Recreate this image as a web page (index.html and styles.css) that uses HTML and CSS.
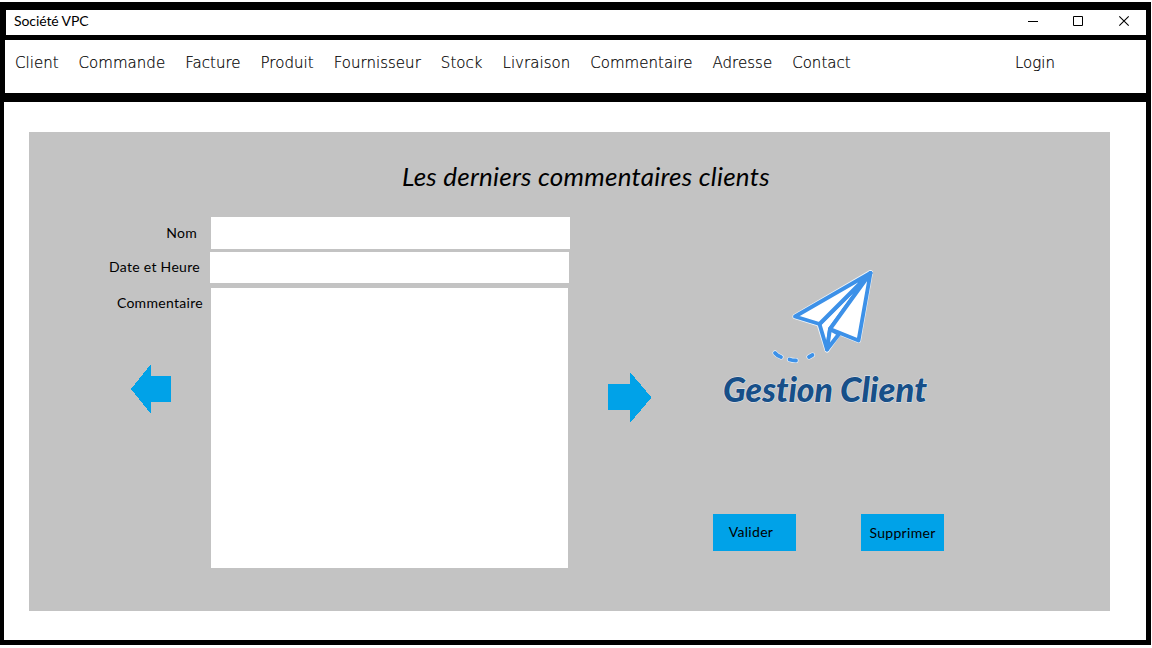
FILE: index.html
```html
<!DOCTYPE html>
<html lang="fr">
<head>
<meta charset="utf-8">
<title>Société VPC</title>
<link rel="stylesheet" href="styles.css">
</head>
<body>
<div class="window">
  <header class="titlebar">
    <span class="app-name">Société VPC</span>
    <svg class="controls" width="102" height="12" viewBox="0 0 102 12" fill="none" stroke="#000">
      <path d="M0 6.500H10"/>
      <path d="M45.500 1.500h9v9h-9z"/>
      <path d="M91.300 1.300l9.400 9.400M100.700 1.300l-9.400 9.400" stroke-width="1.100"/>
    </svg>
  </header>
  <nav class="menu">
    <a>Client</a><a>Commande</a><a>Facture</a><a>Produit</a><a>Fournisseur</a><a>Stock</a><a>Livraison</a><a>Commentaire</a><a>Adresse</a><a>Contact</a><a class="login">Login</a>
  </nav>
  <main class="content">
    <section class="panel">
      <h1 class="heading">Les derniers commentaires clients</h1>
      <div class="columns">
        <div class="previous">
          <div class="labels">
            <label class="label-name">Nom</label>
            <label class="label-date">Date et Heure</label>
            <label class="label-comment">Commentaire</label>
          </div>
          <svg class="arrow-left" width="40" height="50" viewBox="0 0 40 50" shape-rendering="crispEdges"><path fill="#00a2e8" d="M0 25L20 0V12H40V38H20V50Z"/></svg>
        </div>
        <div class="fields">
          <div class="field name"></div>
          <div class="field date"></div>
          <div class="field comment"></div>
        </div>
        <svg class="arrow-right" width="44" height="51" viewBox="0 0 44 51" shape-rendering="crispEdges"><path fill="#00a2e8" d="M43.500 25.500L22 0V12H0V38H22V51Z"/></svg>
        <div class="side">
          <svg class="logo" width="220" height="160" viewBox="715 265 220 160">
            <g stroke-linejoin="round" stroke-linecap="round">
              <path class="halo" d="M795 316.500L870.500 272.500L858.500 340.500L830 329L839 333L827 350L819 324Z"/>
              <g fill="#fff" stroke="#3d91e8" stroke-width="3.900">
                <path d="M819.500 324L870.500 273L830 329L827 349.500Z"/>
                <path d="M830 329L827 349.500L839 334Z"/>
                <path d="M795 316.500L870.500 273L819.500 324Z"/>
                <path d="M870.500 273L858.500 340.500L830 329Z"/>
              </g>
              <path class="halo trail" d="M775 353Q777 355.500 781 357M789.500 359.500Q792 360.500 796 360.500M809 357L812.500 355"/>
              <path fill="none" stroke="#3d91e8" stroke-width="3.800" d="M775 353Q777 355.500 781 357M789.500 359.500Q792 360.500 796 360.500M809 357L812.500 355"/>
            </g>
            <text class="brand" y="402"><tspan x="723" textLength="110" lengthAdjust="spacingAndGlyphs">Gestion</tspan> <tspan x="840" textLength="87" lengthAdjust="spacingAndGlyphs">Client</tspan></text>
          </svg>
          <div class="actions">
            <button class="btn validate">Valider</button>
            <button class="btn remove">Supprimer</button>
          </div>
        </div>
      </div>
    </section>
  </main>
</div>
</body>
</html>
```
FILE: styles.css
```css
* { box-sizing: border-box; }
body {
  margin: 0;
  padding-top: 2px;
  background: #fff;
  color: #000;
  font-family: Lato, "Noto Sans", sans-serif;
  font-variant-ligatures: none;
  overflow: hidden;
}
.window {
  width: 1151px;
  height: 643px;
  padding: 8px 5px 5px 4px;
  background: #000;
}
.titlebar {
  display: flex;
  justify-content: space-between;
  height: 25px;
  margin-left: 2px;
  padding: 0 16px 0 8px;
  background: #fff;
}
.app-name { font-size: 14px; line-height: 22px; letter-spacing: -0.1px; }
.controls { margin-top: 5px; }
.menu {
  display: flex;
  gap: 20px;
  height: 53px;
  margin: 5px 0 9px 1px;
  padding: 11px 91px 0 10px;
  background: #fff;
  color: #000;
  font: 200 15px/25px "DejaVu Sans", "DejaVu Sans Light", sans-serif;
  letter-spacing: 0.03px;
  -webkit-text-stroke: 0.2px #000;
}
.login { margin-left: auto; }
.content {
  height: 538px;
  padding: 30px 36px 29px 25px;
  background: #fff;
}
.panel {
  height: 479px;
  background: #c3c3c3;
}
.heading {
  margin: 0;
  padding: 26px 0 0 373px;
  height: 85px;
  font-size: 26px;
  line-height: 36px;
  letter-spacing: 0.24px;
  font-weight: 400;
  font-style: italic;
  white-space: nowrap;
}
.columns { display: flex; align-items: flex-start; }
.previous { width: 181px; }
.labels {
  display: flex;
  flex-direction: column;
  align-items: flex-end;
  font-size: 14px;
  line-height: 20px;
  letter-spacing: 0.3px;
}
.label-name { margin: 6px 13px 0 0; }
.label-date { margin: 14px 10px 0 0; }
.label-comment { margin: 16px 7px 0 0; }
.arrow-left { display: block; margin: 51px 0 0 102px; }
.fields { width: 360px; }
.field { background: #fff; }
.name { width: 359px; height: 32px; margin-left: 1px; }
.date { width: 359px; height: 31px; margin-top: 3px; }
.comment { width: 357px; height: 280px; margin: 5px 0 0 1px; }
.arrow-right { margin: 155px 0 0 38px; }
.side { margin-left: 61px; }
.logo { display: block; margin: 48px 0 0 2px; }
.halo { fill: none; stroke: #eef5fb; stroke-width: 5px; }
.brand {
  font: italic 900 35px Lato, sans-serif;
  font-variant-ligatures: none;
  font-feature-settings: "liga" 0;
  fill: #174f88;
  stroke: #e3eaf0;
  stroke-width: 1px;
  paint-order: stroke;
}
.actions { display: flex; gap: 65px; margin-top: 89px; }
.btn {
  width: 83px;
  height: 37px;
  padding: 0;
  border: 0;
  background: #00a2e8;
  color: #000;
  font: 14px Lato, sans-serif;
  letter-spacing: 0.3px;
}
.validate { padding: 0 7px 2px 0; }
```
